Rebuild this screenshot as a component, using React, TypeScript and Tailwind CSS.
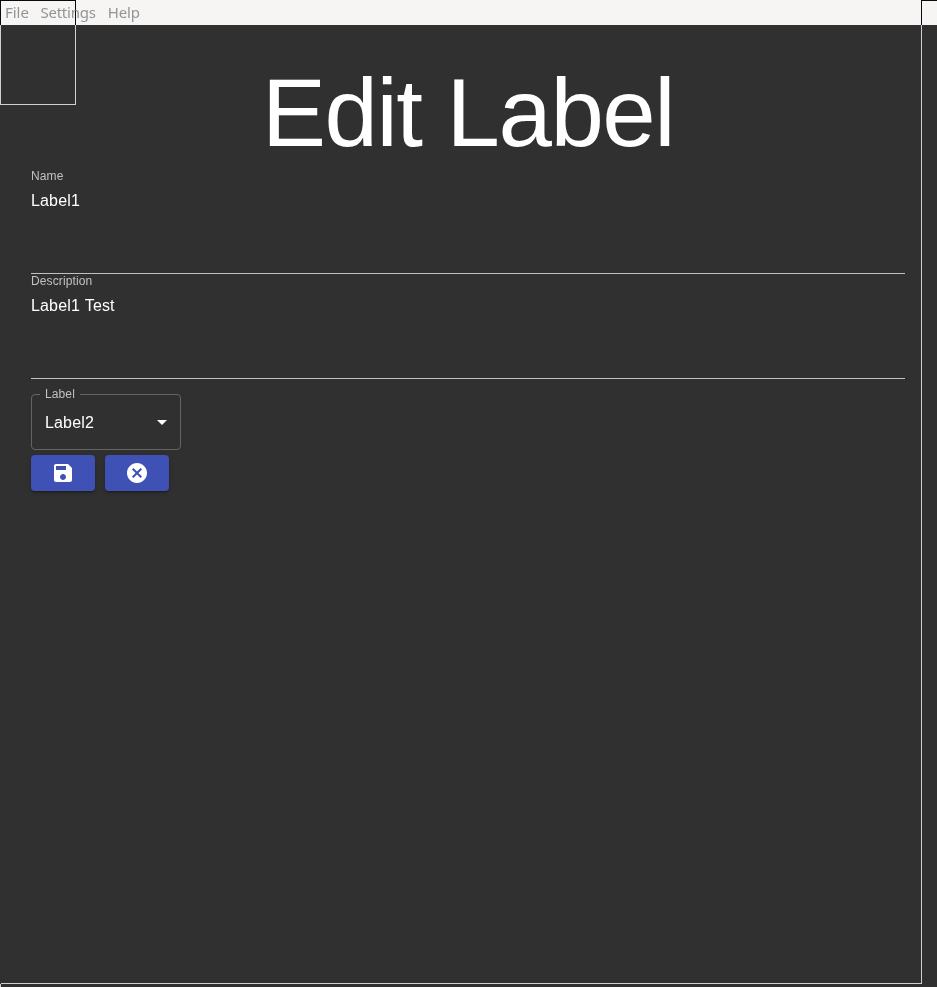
function Field({ label, value }: { label: string; value: string }) {
  return (
    <div className="h-[105px] border-b border-[#c1c1c1] text-white">
      <div className="h-[18px] text-[12px] leading-[14px] tracking-[0.11px] text-[#c1c1c1]">{label}</div>
      <div className="mt-[4px] text-[16px] leading-[19px] tracking-[0.15px] [word-spacing:0.5px]">{value}</div>
    </div>
  );
}

function SelectionLines() {
  return (
    <div className="pointer-events-none absolute inset-0 mix-blend-difference">
      <div className="absolute left-0 top-0 h-[105px] w-[76px] border border-white" />
      <div className="absolute left-[1px] top-[105px] h-[879px] w-[921px] border-b border-white" />
      <div className="absolute left-[921px] top-0 h-[984px] w-px bg-white" />
      <div className="absolute left-[922px] top-0 h-px w-[15px] bg-white" />
      <div className="absolute left-0 top-[984px] h-[3px] w-px bg-white" />
    </div>
  );
}

export default function App() {
  return (
    <div className="relative h-[987px] w-[937px] overflow-hidden bg-[#303030] font-['Liberation_Sans',sans-serif]">
      <nav className="flex h-[25px] items-center bg-[#f6f5f4] pl-[5px] font-['Noto_Sans',sans-serif] text-[15px] leading-[25px] text-[#929595]">
        <span className="w-[35.5px] tracking-[-0.05px]">File</span>
        <span className="w-[67.3px] tracking-[-0.25px]">Settings</span>
        <span className="tracking-[-0.2px]">Help</span>
      </nav>
      <main className="pl-[31px] pr-[32px] pt-[32px]">
        <h1 className="h-[112px] text-center text-[96px] font-normal leading-[112px] tracking-[-1.5px] text-white">Edit Label</h1>
        <Field label="Name" value="Label1" />
        <Field label="Description" value="Label1 Test" />
        <fieldset className="mt-[8px] h-[63px] w-[150px] rounded-[4px] border border-[#646464] pl-[8px]">
          <legend className="px-[5px] text-[12px] leading-[14px] tracking-[0.11px] text-[#c1c1c1]">Label</legend>
          <div className="flex items-start justify-between pl-[5px] pr-[6px] pt-[9px] text-[16px] leading-[24px] tracking-[0.15px] text-white">
            <span className="pt-px">Label2</span>
            <svg className="size-6" viewBox="0 0 24 24" fill="currentColor"><path d="M7 10l5 5 5-5z" /></svg>
          </div>
        </fieldset>
        <div className="mt-[5px] flex gap-[10px] text-white">
          <button className="flex h-9 w-16 items-center justify-center rounded-[4px] bg-[#3f51b5] shadow-[0_3px_1px_-2px_rgba(0,0,0,0.2),0_2px_2px_0_rgba(0,0,0,0.14),0_1px_5px_0_rgba(0,0,0,0.12)]">
            <svg className="size-6" viewBox="0 0 24 24" fill="currentColor"><path d="M17 3H5c-1.11 0-2 .9-2 2v14c0 1.1.89 2 2 2h14c1.1 0 2-.9 2-2V7l-4-4zm-5 16c-1.66 0-3-1.34-3-3s1.34-3 3-3 3 1.34 3 3-1.34 3-3 3zm3-10H5V5h10v4z" /></svg>
          </button>
          <button className="flex h-9 w-16 items-center justify-center rounded-[4px] bg-[#3f51b5] shadow-[0_3px_1px_-2px_rgba(0,0,0,0.2),0_2px_2px_0_rgba(0,0,0,0.14),0_1px_5px_0_rgba(0,0,0,0.12)]">
            <svg className="size-6" viewBox="0 0 24 24" fill="currentColor"><path d="M12 2C6.47 2 2 6.47 2 12s4.47 10 10 10 10-4.47 10-10S17.53 2 12 2zm5 13.59L15.59 17 12 13.41 8.41 17 7 15.59 10.59 12 7 8.41 8.41 7 12 10.59 15.59 7 17 8.41 13.41 12 17 15.59z" /></svg>
          </button>
        </div>
      </main>
      <SelectionLines />
    </div>
  );
}
